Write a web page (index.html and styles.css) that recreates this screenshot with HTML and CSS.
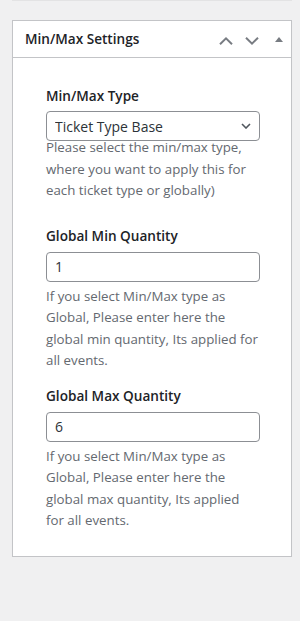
FILE: index.html
```html
<!DOCTYPE html>
<html lang="en">
<head>
<meta charset="utf-8">
<title>Min/Max Settings</title>
<link rel="stylesheet" href="styles.css">
</head>
<body>
<div class="prev-edge"></div>
<div class="postbox">
  <div class="postbox-header">
    <h2 class="postbox-title">Min/Max Settings</h2>
    <div class="handle-actions">
      <button class="handle-btn" type="button" aria-label="Move up">
        <svg class="chev" width="14" height="8" viewBox="0 0 14 8"><polyline points="1,7.2 7,1.4 13,7.2" fill="none" stroke="#787c82" stroke-width="2"/></svg>
      </button>
      <button class="handle-btn" type="button" aria-label="Move down">
        <svg class="chev" width="14" height="8" viewBox="0 0 14 8"><polyline points="1,0.8 7,6.6 13,0.8" fill="none" stroke="#787c82" stroke-width="2"/></svg>
      </button>
      <button class="handle-btn handle-toggle" type="button" aria-label="Toggle panel">
        <svg class="tri" width="8" height="5" viewBox="0 0 8 5"><polygon points="0,5 4,0 8,5" fill="#787c82"/></svg>
      </button>
    </div>
  </div>
  <div class="inside">
    <div class="field field-type">
      <label class="field-label" for="mm-type">Min/Max Type</label>
      <div class="select-wrap">
        <select id="mm-type" class="field-select">
          <option>Ticket Type Base</option>
          <option>Global</option>
        </select>
        <svg class="select-arrow" width="10" height="6" viewBox="0 0 10 6"><polyline points="1,1 5,5 9,1" fill="none" stroke="#50575e" stroke-width="1.6"/></svg>
      </div>
      <p class="desc">Please select the min/max type, where you want to apply this for each ticket type or globally)</p>
    </div>
    <div class="field field-min">
      <label class="field-label" for="mm-min">Global Min Quantity</label>
      <input id="mm-min" class="field-input" type="text" value="1">
      <p class="desc">If you select Min/Max type as Global, Please enter here the global min quantity, Its applied for all events.</p>
    </div>
    <div class="field field-max">
      <label class="field-label" for="mm-max">Global Max Quantity</label>
      <input id="mm-max" class="field-input" type="text" value="6">
      <p class="desc">If you select Min/Max type as Global, Please enter here the global max quantity, Its applied for all events.</p>
    </div>
  </div>
</div>
</body>
</html>
```
FILE: styles.css
```css
* { box-sizing: border-box; }

html, body {
  margin: 0;
  padding: 0;
  background: #f0f0f1;
  font-family: "Open Sans", "Noto Sans", "Liberation Sans", sans-serif;
  color: #1d2327;
}

.prev-edge {
  height: 1px;
  margin: 0 8px 0 12px;
  background: rgba(0, 0, 0, 0.05);
}

.postbox {
  margin: 19px 8px 0 12px;
  background: #fff;
  border: 1px solid #c3c4c7;
  box-shadow: 0 1px 1px rgba(0, 0, 0, 0.04);
}

.postbox-header {
  display: flex;
  align-items: center;
  height: 37px;
  border-bottom: 1px solid #c3c4c7;
}

.postbox-title {
  flex: 1;
  margin: 0;
  padding: 0 12px;
  font-size: 13.6px;
  font-weight: 600;
  line-height: 36px;
  color: #1d2327;
}

.handle-actions {
  display: flex;
  height: 36px;
}

.handle-btn {
  display: flex;
  align-items: center;
  justify-content: center;
  width: 26px;
  height: 36px;
  padding: 3px 0 0;
  margin: 0;
  border: 0;
  background: transparent;
}

.handle-toggle {
  padding: 0 0 0 2px;
}

.chev, .tri { display: block; }

.inside {
  padding: 28px 31px 24px 33px;
}

.field-label {
  display: block;
  margin: 0 0 6px;
  font-size: 13.6px;
  font-weight: 600;
  line-height: 20px;
  color: #1d2327;
}

.field-type .field-label { margin-bottom: 5px; }

.select-wrap {
  position: relative;
}

.field-select,
.field-input {
  display: block;
  width: 100%;
  height: 30px;
  margin: 0;
  border: 1px solid #8c8f94;
  border-radius: 4px;
  background: #fff;
  font-family: inherit;
  font-size: 14px;
  color: #2c3338;
}

.field-select {
  -webkit-appearance: none;
  appearance: none;
  padding: 0 24px 0 8px;
}

.field-input {
  padding: 0 8px;
}

.select-arrow {
  position: absolute;
  right: 9px;
  top: 12px;
  pointer-events: none;
}

.desc {
  margin: 4px 0 0;
  font-size: 13.3px;
  line-height: 21.5px;
  color: #646970;
}

.field-type .desc { margin-top: -4px; }

.field-type { margin-bottom: 24px; }
.field-min { margin-bottom: 14px; }
```
